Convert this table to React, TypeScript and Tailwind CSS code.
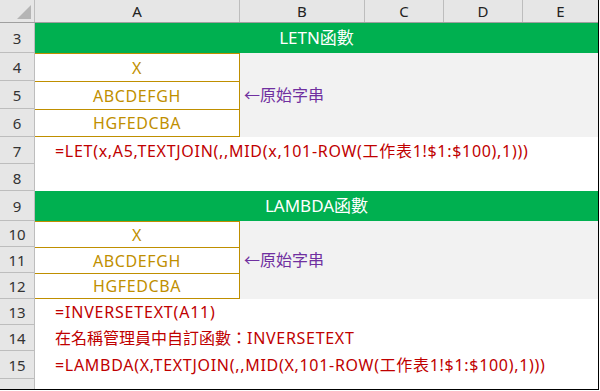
import React from 'react';

const font = { fontFamily: '"Noto Sans", "Noto Sans CJK TC", sans-serif' };

function RowHead({ n, h }: { n: number; h: string }) {
  return (
    <div
      className={`w-[35px] shrink-0 ${h} flex items-center justify-center pt-[2px] bg-[#e6e6e6] border-r border-b border-[#bdbdbd] text-[15px] text-[#333]`}
    >
      {n}
    </div>
  );
}

function TitleRow({ n, title }: { n: number; title: string }) {
  return (
    <div className="flex h-[30px]">
      <RowHead n={n} h="h-[30px]" />
      <div className="flex-1 bg-[#00b050] flex items-center justify-center text-white text-[17px]">
        {title}
      </div>
    </div>
  );
}

function BoxRow({ n, h, text, note, last }: { n: number; h: string; text: string; note?: string; last?: boolean }) {
  return (
    <div className={`flex ${h}`}>
      <RowHead n={n} h={h} />
      <div
        className={`w-[205px] shrink-0 bg-white border-r border-t border-[#bf8f00] ${last ? 'border-b' : ''} flex items-center justify-center text-[16px] tracking-[0.6px] text-[#bf8f00]`}
      >
        {text}
      </div>
      <div className="flex-1 bg-[#f2f2f2] flex items-center pl-[4px] text-[16px] text-[#7030a0]">{note}</div>
    </div>
  );
}

function TextRow({ n, h, children }: { n: number; h: string; children?: React.ReactNode }) {
  return (
    <div className={`flex ${h}`}>
      <RowHead n={n} h={h} />
      <div className="flex-1 bg-white flex items-center pl-[20px] text-[16px] text-[#c00000] whitespace-nowrap">
        {children}
      </div>
    </div>
  );
}

export default function App() {
  const cols = [
    { l: 'A', w: 'w-[205px]' },
    { l: 'B', w: 'w-[125px]' },
    { l: 'C', w: 'w-[79px]' },
    { l: 'D', w: 'w-[79px]' },
  ];
  return (
    <div className="w-[599px] h-[390px] overflow-hidden border-r border-b border-black bg-white" style={font}>
      <div className="flex h-[23px] bg-[#e6e6e6] border-b border-[#9f9f9f] text-[15px] text-[#222]">
        <div className="w-[35px] shrink-0 border-r border-[#bdbdbd] relative">
          <svg className="absolute right-[3px] bottom-[3px]" width="14" height="14" viewBox="0 0 14 14">
            <polygon points="14,0 14,14 0,14" fill="#b5b5b5" />
          </svg>
        </div>
        {cols.map((c) => (
          <div key={c.l} className={`${c.w} shrink-0 border-r border-[#bdbdbd] flex items-center justify-center`}>
            {c.l}
          </div>
        ))}
        <div className="flex-1 flex items-center justify-center">E</div>
      </div>
      <TitleRow n={3} title="LETN函數" />
      <BoxRow n={4} h="h-[28px]" text="X" />
      <BoxRow n={5} h="h-[28px]" text="ABCDEFGH" note="←原始字串" />
      <BoxRow n={6} h="h-[28px]" text="HGFEDCBA" last />
      <TextRow n={7} h="h-[27px]">
        <span className="tracking-[0.7px]">=LET(x,A5,TEXTJOIN(,,MID(x,101-ROW(工作表1!$1:$100),1)))</span>
      </TextRow>
      <TextRow n={8} h="h-[27px]" />
      <TitleRow n={9} title="LAMBDA函數" />
      <BoxRow n={10} h="h-[26px]" text="X" />
      <BoxRow n={11} h="h-[26px]" text="ABCDEFGH" note="←原始字串" />
      <BoxRow n={12} h="h-[26px]" text="HGFEDCBA" last />
      <TextRow n={13} h="h-[26px]">
        <span className="tracking-[0.8px]">=INVERSETEXT(A11)</span>
      </TextRow>
      <TextRow n={14} h="h-[26px]">
        <span>在名稱管理員中自訂函數：</span>
        <span className="tracking-[0.7px]">INVERSETEXT</span>
      </TextRow>
      <TextRow n={15} h="h-[28px]">
        <span className="tracking-[0.7px]">=LAMBDA(X,TEXTJOIN(,,MID(X,101-ROW(工作表1!$1:$100),1)))</span>
      </TextRow>
      <TextRow n={16} h="h-[28px]" />
    </div>
  );
}
